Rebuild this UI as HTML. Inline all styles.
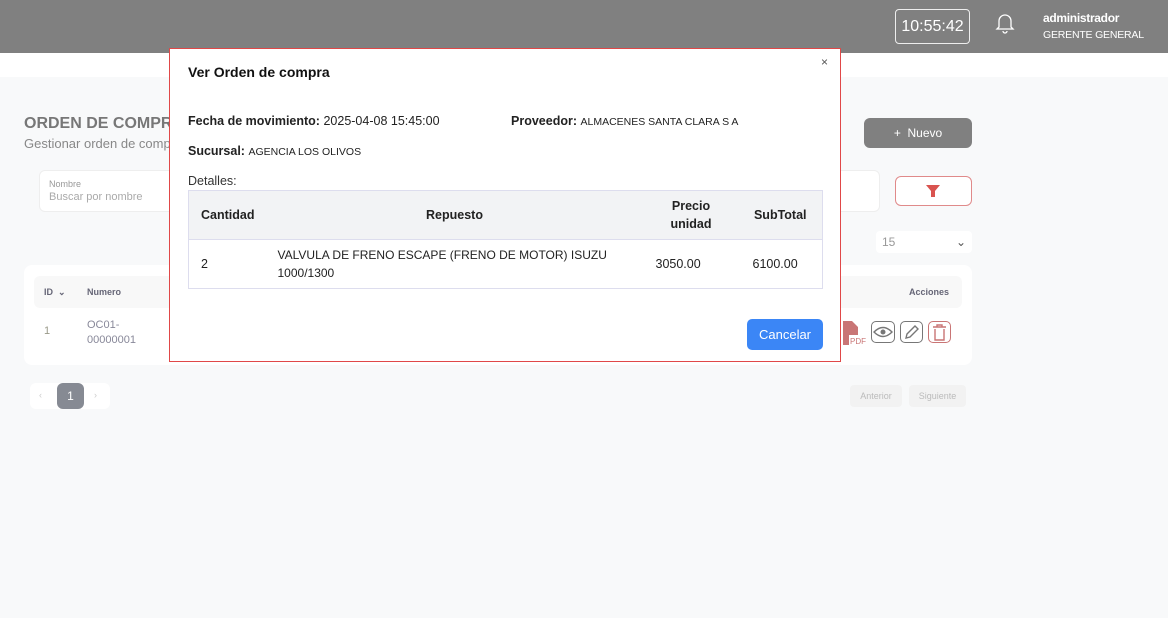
<!DOCTYPE html>
<html><head><meta charset="utf-8"><style>
*{box-sizing:border-box;margin:0;padding:0}
body{width:1168px;height:618px;overflow:hidden;background:#f8f9fa;font-family:"Liberation Sans",sans-serif;position:relative;color:#333}
.hdr{position:absolute;left:0;top:0;width:1168px;height:53px;background:#808080}
.white{position:absolute;left:0;top:53px;width:1168px;height:24px;background:#fff}
.clock{position:absolute;left:895px;top:9px;width:75px;height:35px;border:1px solid #eee;border-radius:4px;color:#fff;font-size:16px;text-align:center;line-height:33px}
.user{position:absolute;left:1043px;top:11px;color:#fff;font-size:12px;font-weight:bold;letter-spacing:-0.3px}
.user2{position:absolute;left:1043px;top:29px;color:#fff;font-size:10.5px;letter-spacing:-0.2px}
.abs{position:absolute}
.modal{position:absolute;left:169px;top:48px;width:672px;height:314px;background:#fff;border:1px solid #e04848}
table{border-collapse:collapse;table-layout:fixed}
</style></head><body>
<div class="hdr"></div>
<div class="white"></div>
<div class="clock">10:55:42</div>
<svg class="abs" style="left:995px;top:12px" width="20" height="22" viewBox="0 0 20 22" fill="none" stroke="#fff" stroke-width="1.3"><path d="M4 15V9a6 6 0 0 1 12 0v6l2 2H2z M8 19a2 2 0 0 0 4 0"/></svg>
<div class="user">administrador</div>
<div class="user2">GERENTE GENERAL</div>

<div class="abs" style="left:24px;top:115px;font-size:16px;font-weight:bold;color:#777">ORDEN DE COMPRA</div>
<div class="abs" style="left:24px;top:136px;font-size:13px;color:#888">Gestionar orden de compra</div>
<div class="abs" style="left:864px;top:118px;width:108px;height:30px;background:#808080;border-radius:6px;color:#fff;font-size:12px;text-align:center;line-height:30px">+&nbsp; Nuevo</div>
<div class="abs" style="left:39px;top:170px;width:841px;height:42px;background:#fff;border:1px solid #eee;border-radius:6px"></div>
<div class="abs" style="left:49px;top:179px;font-size:9px;color:#999">Nombre</div>
<div class="abs" style="left:49px;top:191px;font-size:11px;color:#aaa">Buscar por nombre</div>
<div class="abs" style="left:895px;top:176px;width:77px;height:30px;border:1px solid #e08a8a;border-radius:6px;background:#fff"></div>
<svg class="abs" style="left:926px;top:184px" width="14" height="14"><path d="M0 1h14L9 7v6H5V7z" fill="#d9534f"/></svg>
<div class="abs" style="left:876px;top:231px;width:96px;height:22px;background:#fff;border-radius:4px;font-size:12px;color:#999;padding:4px 6px">15<span style="float:right;color:#555">&#8964;</span></div>
<div class="abs" style="left:24px;top:265px;width:948px;height:100px;background:#fff;border-radius:8px"></div>
<div class="abs" style="left:34px;top:276px;width:928px;height:32px;background:#f8f8f8;border-radius:6px"></div>
<div class="abs" style="left:44px;top:287px;font-size:9px;font-weight:bold;color:#667">ID &nbsp;⌄</div>
<div class="abs" style="left:87px;top:287px;font-size:9px;font-weight:bold;color:#667">Numero</div>
<div class="abs" style="left:909px;top:287px;font-size:9px;font-weight:bold;color:#667">Acciones</div>
<div class="abs" style="left:44px;top:325px;font-size:11px;color:#998">1</div>
<div class="abs" style="left:87px;top:318px;font-size:11px;color:#889;line-height:15px">OC01-<br>00000001</div>
<svg class="abs" style="left:843px;top:321px" width="24" height="24"><path d="M0 0h9l6 6v8H6v10H0z" fill="#c97575"/><text x="7" y="23" font-size="8" fill="#c97575" font-family="Liberation Sans">PDF</text></svg>
<div class="abs" style="left:871px;top:321px;width:24px;height:22px;border:1.5px solid #777;border-radius:5px"></div>
<svg class="abs" style="left:873px;top:326px" width="20" height="12"><path d="M1 6Q10-3 19 6Q10 15 1 6z" fill="none" stroke="#777" stroke-width="1.4"/><circle cx="10" cy="6" r="2.5" fill="#777"/></svg>
<div class="abs" style="left:900px;top:321px;width:23px;height:22px;border:1.5px solid #777;border-radius:5px"></div>
<svg class="abs" style="left:903px;top:324px" width="17" height="17"><path d="M3 14l1-4 8-8 3 3-8 8z" fill="none" stroke="#777" stroke-width="1.4"/></svg>
<div class="abs" style="left:928px;top:321px;width:23px;height:22px;border:1.5px solid #c97575;border-radius:5px"></div>
<svg class="abs" style="left:932px;top:324px" width="15" height="17"><path d="M1 3h13M5 3V1h5v2M3 5v11h9V5" fill="none" stroke="#c97575" stroke-width="1.4"/></svg>
<div class="abs" style="left:30px;top:383px;width:80px;height:26px;background:#fff;border-radius:6px;font-size:9px;color:#ccc;padding:7px 9px">‹</div>
<div class="abs" style="left:57px;top:383px;width:27px;height:26px;background:#868a93;border-radius:6px;color:#fff;font-size:12px;text-align:center;line-height:26px">1</div>
<div class="abs" style="left:94px;top:390px;font-size:9px;color:#ccc">›</div>
<div class="abs" style="left:850px;top:385px;width:52px;height:22px;background:#f2f2f2;border-radius:4px;font-size:9px;color:#bbb;text-align:center;line-height:22px">Anterior</div>
<div class="abs" style="left:909px;top:385px;width:57px;height:22px;background:#f2f2f2;border-radius:4px;font-size:9px;color:#bbb;text-align:center;line-height:22px">Siguiente</div>

<div class="modal">
<div class="abs" style="left:18px;top:15px;font-size:14px;font-weight:bold;color:#111">Ver Orden de compra</div>
<div class="abs" style="left:651px;top:6px;font-size:12px;color:#555">×</div>
<div class="abs" style="left:18px;top:65px;font-size:12.5px;color:#222"><b>Fecha de movimiento:</b> 2025-04-08 15:45:00</div>
<div class="abs" style="left:341px;top:65px;font-size:12.5px;color:#222"><b>Proveedor:</b> <span style="font-size:10.5px">ALMACENES SANTA CLARA S A</span></div>
<div class="abs" style="left:18px;top:95px;font-size:12.5px;color:#222"><b>Sucursal:</b> <span style="font-size:10.5px">AGENCIA LOS OLIVOS</span></div>
<div class="abs" style="left:18px;top:125px;font-size:12.5px;color:#333">Detalles:</div>
<table class="abs" style="left:18px;top:141px;width:634px;font-size:12.5px;color:#222;border:1px solid #dde">
<colgroup><col style="width:77px"><col style="width:378px"><col style="width:95px"><col style="width:84px"></colgroup>
<tr style="background:#f2f3f5;height:49px;font-weight:bold"><td style="padding-left:12px">Cantidad</td><td style="text-align:center">Repuesto</td><td style="text-align:center;line-height:18px">Precio<br>unidad</td><td style="text-align:center">SubTotal</td></tr>
<tr style="height:49px;border-top:1px solid #dde"><td style="padding-left:12px">2</td><td style="padding-left:12px;padding-right:6px;line-height:18px;font-size:12px">VALVULA DE FRENO ESCAPE (FRENO DE MOTOR) ISUZU 1000/1300</td><td style="padding-left:12px">3050.00</td><td style="padding-left:14px">6100.00</td></tr>
</table>
<div class="abs" style="left:577px;top:270px;width:76px;height:31px;background:#3b86f6;border-radius:5px;color:#fff;font-size:13px;text-align:center;line-height:31px">Cancelar</div>
</div>
</body></html>
